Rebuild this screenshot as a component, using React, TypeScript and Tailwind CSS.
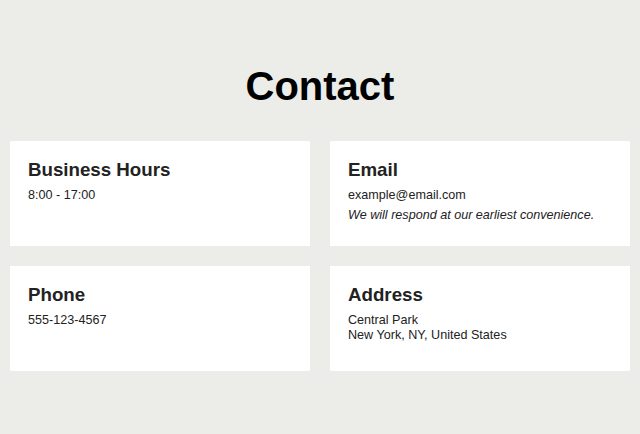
import React from 'react';

type Card = { title: string; lines: React.ReactNode };

const cards: Card[] = [
  { title: 'Business Hours', lines: <p>8:00 - 17:00</p> },
  {
    title: 'Email',
    lines: (
      <>
        <p>example@email.com</p>
        <p className="mt-[5px] italic">We will respond at our earliest convenience.</p>
      </>
    ),
  },
  { title: 'Phone', lines: <p>555-123-4567</p> },
  {
    title: 'Address',
    lines: (
      <p>
        Central Park
        <br />
        New York, NY, United States
      </p>
    ),
  },
];

export default function App() {
  return (
    <div
      className="min-h-screen bg-[#ecede9] px-[10px] pt-[63px]"
      style={{ fontFamily: '"Liberation Sans", Arial, sans-serif' }}
    >
      {/* Title */}
      <h1 className="text-center text-[40px] font-bold leading-[46px] text-black">Contact</h1>

      {/* Cards */}
      <div className="mt-[32px] grid grid-cols-2 gap-x-[20px] gap-y-[20px]">
        {cards.map((c) => (
          <div key={c.title} className="h-[105px] bg-white px-[18px] pt-[18px] text-[#222]">
            <h3 className="text-[18.72px] font-bold leading-[21px]">{c.title}</h3>
            <div className="mt-[8px] text-[12.6px] leading-[14.7px]">{c.lines}</div>
          </div>
        ))}
      </div>
    </div>
  );
}
